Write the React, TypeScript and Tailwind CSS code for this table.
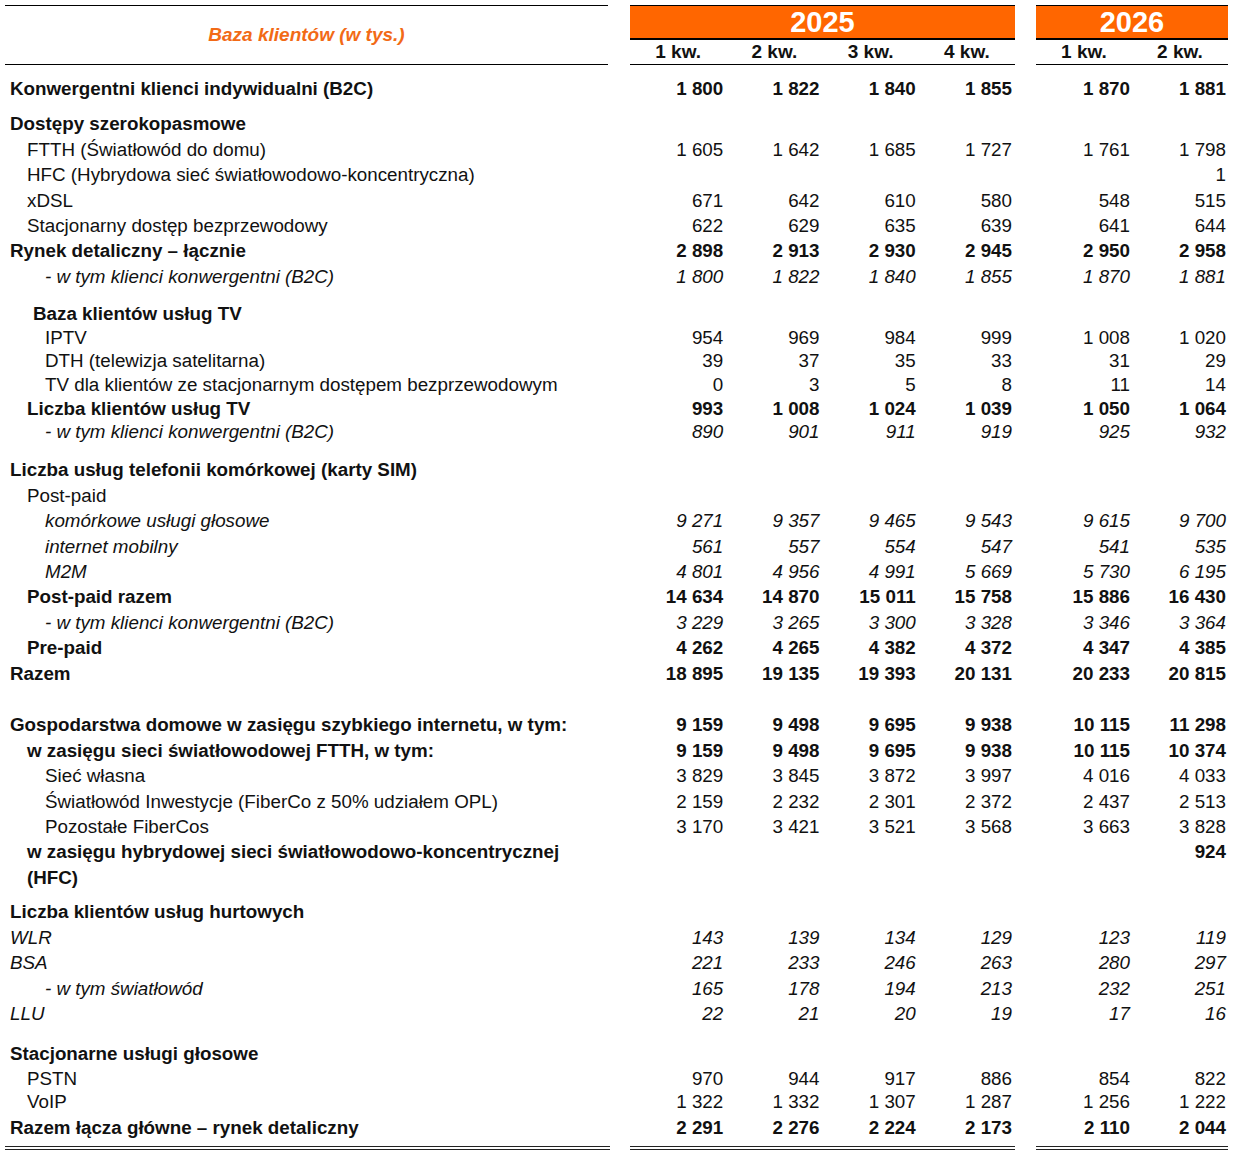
import React from "react"

type Row = {
  label: React.ReactNode
  pad: string
  kind: "b" | "i" | "n"
  v?: string[]
  mt?: string
  lh?: string
}

const e = ["", "", "", "", "", ""]

const rows: Row[] = [
  { label: "Konwergentni klienci indywidualni (B2C)", pad: "pl-[10px]", kind: "b", v: ["1 800", "1 822", "1 840", "1 855", "1 870", "1 881"], mt: "mt-[11.3px]" },
  { label: "Dostępy szerokopasmowe", pad: "pl-[10px]", kind: "b", mt: "mt-[9.6px]" },
  { label: "FTTH (Światłowód do domu)", pad: "pl-[27px]", kind: "n", v: ["1 605", "1 642", "1 685", "1 727", "1 761", "1 798"] },
  { label: "HFC (Hybrydowa sieć światłowodowo-koncentryczna)", pad: "pl-[27px]", kind: "n", v: ["", "", "", "", "", "1"] },
  { label: "xDSL", pad: "pl-[27px]", kind: "n", v: ["671", "642", "610", "580", "548", "515"] },
  { label: "Stacjonarny dostęp bezprzewodowy", pad: "pl-[27px]", kind: "n", v: ["622", "629", "635", "639", "641", "644"] },
  { label: "Rynek detaliczny – łącznie", pad: "pl-[10px]", kind: "b", v: ["2 898", "2 913", "2 930", "2 945", "2 950", "2 958"] },
  { label: "- w tym klienci konwergentni (B2C)", pad: "pl-[45px]", kind: "i", v: ["1 800", "1 822", "1 840", "1 855", "1 870", "1 881"] },

  { label: "Baza klientów usług TV", pad: "pl-[33px]", kind: "b", mt: "mt-[13.1px]", lh: "leading-[23.6px]" },
  { label: "IPTV", pad: "pl-[45px]", kind: "n", v: ["954", "969", "984", "999", "1 008", "1 020"], lh: "leading-[23.6px]" },
  { label: "DTH (telewizja satelitarna)", pad: "pl-[45px]", kind: "n", v: ["39", "37", "35", "33", "31", "29"], lh: "leading-[23.6px]" },
  { label: "TV dla klientów ze stacjonarnym dostępem bezprzewodowym", pad: "pl-[45px]", kind: "n", v: ["0", "3", "5", "8", "11", "14"], lh: "leading-[23.6px]" },
  { label: "Liczba klientów usług TV", pad: "pl-[27px]", kind: "b", v: ["993", "1 008", "1 024", "1 039", "1 050", "1 064"], lh: "leading-[23.6px]" },
  { label: "- w tym klienci konwergentni (B2C)", pad: "pl-[45px]", kind: "i", v: ["890", "901", "911", "919", "925", "932"], lh: "leading-[23.6px]" },

  { label: "Liczba usług telefonii komórkowej (karty SIM)", pad: "pl-[10px]", kind: "b", mt: "mt-[13.5px]" },
  { label: "Post-paid", pad: "pl-[27px]", kind: "n" },
  { label: "komórkowe usługi głosowe", pad: "pl-[45px]", kind: "i", v: ["9 271", "9 357", "9 465", "9 543", "9 615", "9 700"] },
  { label: "internet mobilny", pad: "pl-[45px]", kind: "i", v: ["561", "557", "554", "547", "541", "535"] },
  { label: "M2M", pad: "pl-[45px]", kind: "i", v: ["4 801", "4 956", "4 991", "5 669", "5 730", "6 195"] },
  { label: "Post-paid razem", pad: "pl-[27px]", kind: "b", v: ["14 634", "14 870", "15 011", "15 758", "15 886", "16 430"] },
  { label: "- w tym klienci konwergentni (B2C)", pad: "pl-[45px]", kind: "i", v: ["3 229", "3 265", "3 300", "3 328", "3 346", "3 364"] },
  { label: "Pre-paid", pad: "pl-[27px]", kind: "b", v: ["4 262", "4 265", "4 382", "4 372", "4 347", "4 385"] },
  { label: "Razem", pad: "pl-[10px]", kind: "b", v: ["18 895", "19 135", "19 393", "20 131", "20 233", "20 815"] },

  { label: "Gospodarstwa domowe w zasięgu szybkiego internetu, w tym:", pad: "pl-[10px]", kind: "b", v: ["9 159", "9 498", "9 695", "9 938", "10 115", "11 298"], mt: "mt-[26.4px]" },
  { label: "w zasięgu sieci światłowodowej FTTH, w tym:", pad: "pl-[27px]", kind: "b", v: ["9 159", "9 498", "9 695", "9 938", "10 115", "10 374"] },
  { label: "Sieć własna", pad: "pl-[45px]", kind: "n", v: ["3 829", "3 845", "3 872", "3 997", "4 016", "4 033"] },
  { label: "Światłowód Inwestycje (FiberCo z 50% udziałem OPL)", pad: "pl-[45px]", kind: "n", v: ["2 159", "2 232", "2 301", "2 372", "2 437", "2 513"] },
  { label: "Pozostałe FiberCos", pad: "pl-[45px]", kind: "n", v: ["3 170", "3 421", "3 521", "3 568", "3 663", "3 828"] },
  {
    label: (
      <>
        w zasięgu hybrydowej sieci światłowodowo-koncentrycznej
        <br />
        (HFC)
      </>
    ),
    pad: "pl-[27px]",
    kind: "b",
    v: ["", "", "", "", "", "924"],
  },

  { label: "Liczba klientów usług hurtowych", pad: "pl-[10px]", kind: "b", mt: "mt-[9.2px]" },
  { label: "WLR", pad: "pl-[10px]", kind: "i", v: ["143", "139", "134", "129", "123", "119"] },
  { label: "BSA", pad: "pl-[10px]", kind: "i", v: ["221", "233", "246", "263", "280", "297"] },
  { label: "- w tym światłowód", pad: "pl-[45px]", kind: "i", v: ["165", "178", "194", "213", "232", "251"] },
  { label: "LLU", pad: "pl-[10px]", kind: "i", v: ["22", "21", "20", "19", "17", "16"] },

  { label: "Stacjonarne usługi głosowe", pad: "pl-[10px]", kind: "b", mt: "mt-[15px]" },
  { label: "PSTN", pad: "pl-[27px]", kind: "n", v: ["970", "944", "917", "886", "854", "822"], lh: "leading-[23.6px]" },
  { label: "VoIP", pad: "pl-[27px]", kind: "n", v: ["1 322", "1 332", "1 307", "1 287", "1 256", "1 222"], lh: "leading-[23.6px]" },
  { label: "Razem łącza główne – rynek detaliczny", pad: "pl-[10px]", kind: "b", v: ["2 291", "2 276", "2 224", "2 173", "2 110", "2 044"], mt: "mt-[1.4px]" },
]

const kindCls = { b: "font-bold", i: "italic", n: "" }

function DataRow({ r }: { r: Row }) {
  const v = r.v ?? e
  return (
    <div className={`flex ${kindCls[r.kind]} ${r.mt ?? ""} ${r.lh ?? "leading-[25.4px]"}`}>
      <div className={`w-[608px] whitespace-nowrap ${r.pad}`}>{r.label}</div>
      <div className="ml-[22px] flex w-[385px]">
        {v.slice(0, 4).map((x, i) => (
          <div key={i} className="w-[96.25px] pr-[3px] text-right">
            {x}
          </div>
        ))}
      </div>
      <div className="ml-[21px] flex w-[192px]">
        {v.slice(4).map((x, i) => (
          <div key={i} className="w-[96px] pr-[2px] text-right">
            {x}
          </div>
        ))}
      </div>
    </div>
  )
}

function YearHead({ year, cols, w }: { year: string; cols: string[]; w: string }) {
  return (
    <div className={w}>
      <div className="flex h-[35px] items-center justify-center border-t border-b-2 border-black bg-[#ff6600] text-[29px] font-bold leading-none text-white">
        {year}
      </div>
      <div className="flex h-[25px] border-b border-black text-[19px] font-bold leading-[24px]">
        {cols.map((c) => (
          <div key={c} className="flex-1 text-center">
            {c}
          </div>
        ))}
      </div>
    </div>
  )
}

export default function App() {
  return (
    <div className="h-[1155px] w-[1234px] overflow-hidden bg-white font-['Liberation_Sans',Arial,sans-serif] text-[18.8px] text-[#111]">
      <div className="flex pt-[5px]">
        <div className="ml-[5px] flex h-[60px] w-[603px] items-center justify-center border-t border-b border-black text-[19px] font-bold italic text-[#f26a16]">
          Baza klientów (w tys.)
        </div>
        <div className="ml-[22px]">
          <YearHead year="2025" cols={["1 kw.", "2 kw.", "3 kw.", "4 kw."]} w="w-[385px]" />
        </div>
        <div className="ml-[21px]">
          <YearHead year="2026" cols={["1 kw.", "2 kw."]} w="w-[192px]" />
        </div>
      </div>

      {rows.map((r, i) => (
        <DataRow key={i} r={r} />
      ))}

      <div className="mt-[5.3px] flex">
        <div className="ml-[5px] w-[605px] border-t-[4px] border-double border-[#222]" />
        <div className="ml-[20px] w-[385px] border-t-[4px] border-double border-[#222]" />
        <div className="ml-[21px] w-[192px] border-t-[4px] border-double border-[#222]" />
      </div>
    </div>
  )
}
